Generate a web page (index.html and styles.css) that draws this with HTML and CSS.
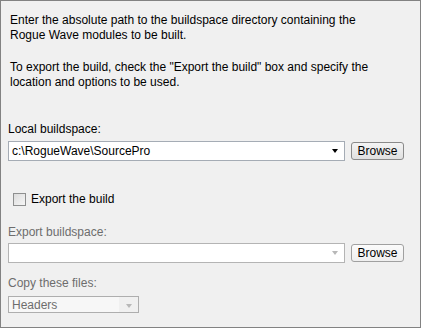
FILE: index.html
```html
<!DOCTYPE html>
<html lang="en">
<head>
  <meta charset="UTF-8" />
  <title>Buildspace</title>
  <link rel="stylesheet" href="styles.css">
</head>
<body>
  <div class="panel">
    <p class="intro">Enter the absolute path to the buildspace directory containing the<br>Rogue Wave modules to be built.</p>
    <p class="intro second">To export the build, check the "Export the build" box and specify the<br>location and options to be used.</p>

    <div class="label local">Local buildspace:</div>
    <div class="row">
      <div class="combo">
        <span class="value">c:\RogueWave\SourcePro</span>
        <span class="arrow"></span>
      </div>
      <button class="browse">Browse</button>
    </div>

    <label class="check">
      <span class="box"></span>
      <span>Export the build</span>
    </label>

    <div class="label disabled">Export buildspace:</div>
    <div class="row tight">
      <div class="combo off">
        <span class="value"></span>
        <span class="arrow"></span>
      </div>
      <button class="browse light">Browse</button>
    </div>

    <div class="label disabled files">Copy these files:</div>
    <div class="select">
      <span class="value">Headers</span>
      <span class="arrow"></span>
    </div>
  </div>
</body>
</html>
```

FILE: styles.css
```css
body {
  margin: 0;
  font-family: "Liberation Sans", Arial, sans-serif;
  font-size: 12px;
  line-height: 15px;
  color: #000;
}
.panel {
  width: 421px;
  height: 328px;
  box-sizing: border-box;
  border: 1px solid #828282;
  background: #f0f0f0;
  padding: 12px 7px 0 7px;
}
.intro {
  margin: 0 0 0 2px;
}
.intro.second {
  margin-top: 17px;
}
.label {
  margin-top: 32px;
}
.label.disabled {
  color: #6d6d6d;
  margin-top: 18px;
}
.label.files {
  margin-top: 13px;
}
.row {
  display: flex;
  align-items: center;
  gap: 6px;
  margin-top: 4px;
}
.row.tight {
  margin-top: 3px;
}
.combo {
  width: 337px;
  height: 20px;
  box-sizing: border-box;
  border: 1px solid #a5acb5;
  background: #fff;
  display: flex;
  align-items: center;
  padding: 0 6px 0 3px;
}
.combo.off {
  border-color: #b4b4b4;
}
.value {
  flex: 1;
}
.arrow {
  width: 0;
  height: 0;
  border-left: 3px solid transparent;
  border-right: 3px solid transparent;
  border-top: 4px solid #000;
}
.off .arrow,
.select .arrow {
  border-top-color: #b8b8b8;
}
.browse {
  width: 53px;
  height: 18px;
  padding: 0;
  font: inherit;
  color: #000;
  border: 1px solid #8a8a8a;
  border-radius: 3px;
  background: linear-gradient(#f4f4f4, #e0e0e0);
}
.browse.light {
  background: linear-gradient(#fbfbfb, #efefef);
  border-color: #a0a0a0;
}
.check {
  display: flex;
  align-items: center;
  gap: 5px;
  margin: 31px 0 0 5px;
}
.box {
  width: 13px;
  height: 13px;
  box-sizing: border-box;
  border: 1px solid #8e8f8f;
  background: linear-gradient(135deg, #dcdcdc, #f6f6f6);
}
.select {
  width: 131px;
  height: 17px;
  box-sizing: border-box;
  margin-top: 5px;
  border: 1px solid #aeaeae;
  background: linear-gradient(90deg, #f7f7f7 85%, #f0f0f0 85%);
  color: #6d6d6d;
  display: flex;
  align-items: center;
  padding: 2px 6px 0 3px;
}
```
